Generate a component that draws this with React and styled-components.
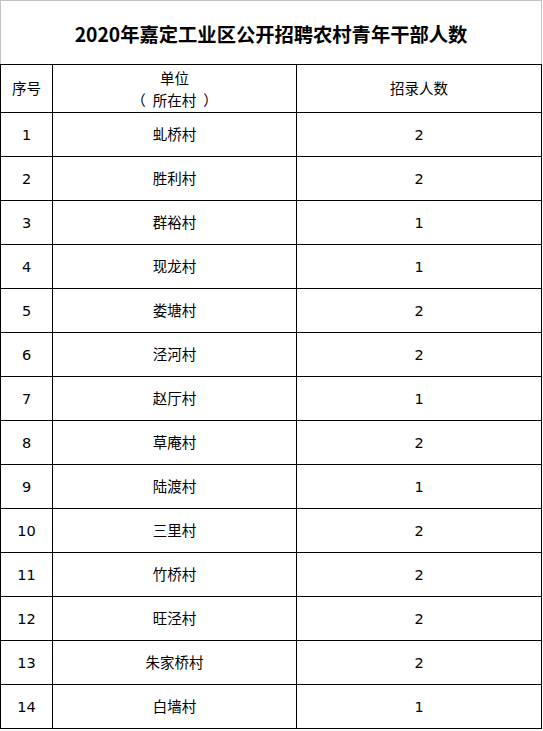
import React from 'react';
import styled, { createGlobalStyle } from 'styled-components';

const GlobalStyle = createGlobalStyle`
  html, body {
    margin: 0;
    padding: 0;
    background: #fff;
  }
  body {
    font-family: "DejaVu Sans", "Noto Sans CJK SC", sans-serif;
    color: #000;
  }
`;

const Table = styled.table`
  width: 541px;
  border-collapse: collapse;
  table-layout: fixed;
  font-size: 14.5px;
`;

const TitleCell = styled.td`
  height: 61px;
  padding: 2px 0 0;
  border-top: 1px solid #c3c3c3;
  border-left: 1px solid #c3c3c3;
  border-right: 1px solid #c3c3c3;
  border-bottom: 1px solid #000;
  text-align: center;
  vertical-align: middle;
  font-family: "Noto Sans CJK SC", sans-serif;
  font-size: 19.3px;
  font-weight: 700;
`;

const Cell = styled.td`
  height: ${(p) => p.$h}px;
  padding: 0;
  border: 1px solid #000;
  text-align: center;
  vertical-align: middle;
  line-height: 22px;
  font-family: "DejaVu Sans", "Noto Sans CJK SC", sans-serif;
`;

const HeadLine = styled.div`
  line-height: 22px;
  font-family: "Noto Sans CJK SC", sans-serif;
`;

const Paren = styled.span`
  display: inline-block;
  margin: ${(p) => (p.$open ? '0 7px 0 0' : '0 0 0 7px')};
`;

const rows = [
  ['虬桥村', 2],
  ['胜利村', 2],
  ['群裕村', 1],
  ['现龙村', 1],
  ['娄塘村', 2],
  ['泾河村', 2],
  ['赵厅村', 1],
  ['草庵村', 2],
  ['陆渡村', 1],
  ['三里村', 2],
  ['竹桥村', 2],
  ['旺泾村', 2],
  ['朱家桥村', 2],
  ['白墙村', 1],
];

export default function App() {
  return (
    <>
      <GlobalStyle />
      <Table>
        <colgroup>
          <col style={{ width: 52 }} />
          <col style={{ width: 244 }} />
          <col style={{ width: 245 }} />
        </colgroup>
        <tbody>
          <tr>
            <TitleCell colSpan={3}>2020年嘉定工业区公开招聘农村青年干部人数</TitleCell>
          </tr>
          <tr>
            <Cell $h={47}>序号</Cell>
            <Cell $h={47}>
              <HeadLine>单位</HeadLine>
              <HeadLine>
                <Paren $open>（</Paren>所在村<Paren>）</Paren>
              </HeadLine>
            </Cell>
            <Cell $h={47}>招录人数</Cell>
          </tr>
          {rows.map(([name, count], i) => (
            <tr key={name}>
              <Cell $h={43}>{i + 1}</Cell>
              <Cell $h={43}>{name}</Cell>
              <Cell $h={43}>{count}</Cell>
            </tr>
          ))}
        </tbody>
      </Table>
    </>
  );
}
